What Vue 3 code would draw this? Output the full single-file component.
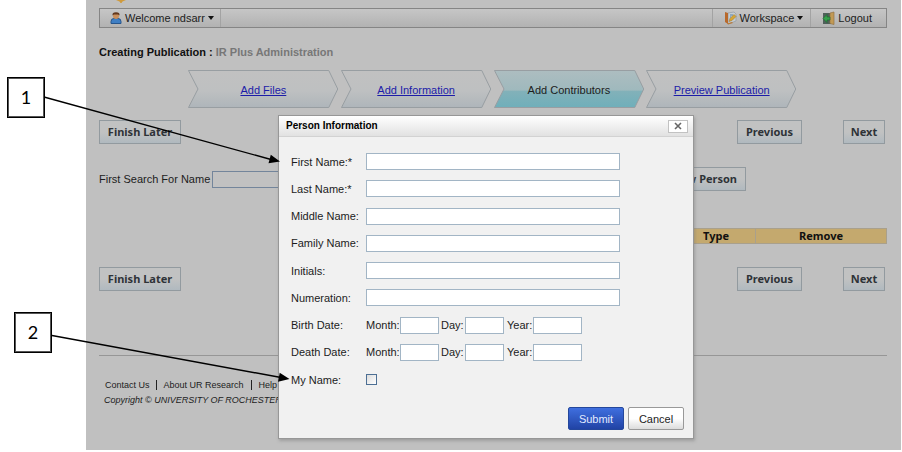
<script setup>
import { reactive, ref } from 'vue'

const steps = [
  { label: 'Add Files' },
  { label: 'Add Information' },
  { label: 'Add Contributors', active: true },
  { label: 'Preview Publication' }
]

const nameFields = [
  { id: 'first', label: 'First Name:*' },
  { id: 'last', label: 'Last Name:*' },
  { id: 'middle', label: 'Middle Name:' },
  { id: 'family', label: 'Family Name:' },
  { id: 'initials', label: 'Initials:' },
  { id: 'numeration', label: 'Numeration:' }
]

const dateFields = [
  { id: 'birth', label: 'Birth Date:' },
  { id: 'death', label: 'Death Date:' }
]

const person = reactive({})
const isMe = ref(false)
const search = ref('')
</script>

<template>
  <div class="stage">
    <main class="page">
      <svg class="logo" viewBox="0 0 14 4" aria-hidden="true">
        <path d="M2 0h10L8.500 1.500 7.500 3h-1L5.500 1.500z" fill="#cf9a3c" />
      </svg>

      <header class="toolbar">
        <button type="button" class="tool welcome">
          <svg width="12" height="14" viewBox="0 0 12 14" aria-hidden="true">
            <path d="M1 12.500V10.500q0-3 3-3h4q3 0 3 3v2z" fill="#3f7fc4" stroke="#28568c" />
            <circle cx="6" cy="5" r="3" fill="#c98f5c" />
            <path d="M2.500 4.500Q2 1.200 6 1.200T9.500 4.500L8 3.500H4z" fill="#63371c" />
          </svg>
          Welcome ndsarr
          <span class="caret"></span>
        </button>
        <button type="button" class="tool workspace">
          <svg width="13" height="14" viewBox="0 0 13 14" aria-hidden="true">
            <path d="M4 2l6-1 2 2v7l-8 3z" fill="#c5ccd2" stroke="#929ba3" stroke-width=".7" />
            <path d="M1 1l3 1v11l-3-2z" fill="#b8692c" />
            <path d="M3 12.500l5-1.500 1 1-5 1.500z" fill="#ba7938" />
            <path d="M5 10.500l1-3 4-4 2 2-4 4z" fill="#d5a636" stroke="#9b7330" stroke-width=".5" />
            <path d="M6 4h3M6 6h1" stroke="#5c87aa" />
          </svg>
          Workspace
          <span class="caret"></span>
        </button>
        <button type="button" class="tool logout">
          <svg width="13" height="14" viewBox="0 0 13 14" aria-hidden="true">
            <path d="M1 2h8v11H1z" fill="#50605a" />
            <path d="M8 2l4-1v12.500l-4-1z" fill="#c29a55" stroke="#927245" stroke-width=".7" />
            <path d="M1 7.500l4-4V6h3v3H5v2.500z" fill="#36a14b" stroke="#176c2d" stroke-width=".6" />
          </svg>
          Logout
        </button>
      </header>

      <h1 class="title">Creating Publication : <span>IR Plus Administration</span></h1>

      <nav class="steps" aria-label="Publication steps">
        <div v-for="s in steps" :key="s.label" class="step">
          <svg class="shape" viewBox="0 0 151 38" preserveAspectRatio="none" aria-hidden="true">
            <defs>
              <linearGradient id="plain" x1="0" y1="0" x2="0" y2="1">
                <stop offset="0" stop-color="#c1c1c1" />
                <stop offset=".55" stop-color="#bec0c1" />
                <stop offset="1" stop-color="#aeb5ba" />
              </linearGradient>
              <linearGradient id="active" x1="0" y1="0" x2="0" y2="1">
                <stop offset="0" stop-color="#adbdc0" />
                <stop offset=".53" stop-color="#9fb9bd" />
                <stop offset=".56" stop-color="#82b1b9" />
                <stop offset="1" stop-color="#6fafba" />
              </linearGradient>
            </defs>
            <path d="M.5.500H141L150 19 141 37.500H.5L10 19z" :fill="s.active ? 'url(#active)' : 'url(#plain)'" stroke="#989ea2" />
          </svg>
          <span v-if="s.active" class="step-text">{{ s.label }}</span>
          <a v-else href="#" class="step-text">{{ s.label }}</a>
        </div>
      </nav>

      <div class="actions">
        <button type="button" class="btn later">Finish Later</button>
        <button type="button" class="btn previous">Previous</button>
        <button type="button" class="btn next">Next</button>
      </div>

      <div class="search">
        <label for="search">First Search For Name</label>
        <input id="search" v-model="search" type="text" />
        <button type="button" class="btn">Add New Person</button>
      </div>

      <table class="people">
        <thead>
          <tr><th>Name</th><th class="type">Type</th><th class="remove">Remove</th></tr>
        </thead>
      </table>

      <div class="actions">
        <button type="button" class="btn later">Finish Later</button>
        <button type="button" class="btn previous">Previous</button>
        <button type="button" class="btn next">Next</button>
      </div>

      <footer class="footer">
        <div class="links">
          <a href="#">Contact Us</a><a href="#">About UR Research</a><a href="#">Help</a>
        </div>
        <p>Copyright © UNIVERSITY OF ROCHESTER LIBRARIES</p>
      </footer>

      <form class="dialog" role="dialog" aria-labelledby="dialog-title" @submit.prevent>
        <div class="dialog-head">
          <h2 id="dialog-title">Person Information</h2>
          <button type="button" class="close" aria-label="Close">
            <svg width="8" height="8" viewBox="0 0 8 8" aria-hidden="true">
              <path d="M1 1l6 6M7 1L1 7" stroke="#666" stroke-width="1.600" />
            </svg>
          </button>
        </div>
        <div class="fields">
          <div v-for="f in nameFields" :key="f.id" class="row">
            <label :for="f.id">{{ f.label }}</label>
            <input :id="f.id" v-model="person[f.id]" type="text" class="wide" />
          </div>
          <div v-for="d in dateFields" :key="d.id" class="row" role="group" :aria-label="d.label">
            <span>{{ d.label }}</span>
            <div class="date">
              <label class="month">Month:<input v-model="person[d.id + 'Month']" type="text" /></label>
              <label class="day">Day:<input v-model="person[d.id + 'Day']" type="text" /></label>
              <label class="year">Year:<input v-model="person[d.id + 'Year']" type="text" /></label>
            </div>
          </div>
          <div class="row">
            <label for="mine">My Name:</label>
            <input id="mine" v-model="isMe" type="checkbox" />
          </div>
        </div>
        <div class="dialog-foot">
          <button type="submit" class="submit">Submit</button>
          <button type="button" class="cancel">Cancel</button>
        </div>
      </form>
    </main>

    <svg class="arrows" width="300" height="450" viewBox="0 0 300 450" aria-hidden="true">
      <path d="M44 97L271 159.500M52 335.500L281 377.500" stroke="#000" stroke-width="1.400" fill="none" />
      <path d="M280 161.500L268.500 163.300 270.800 154.800zM289.500 379L278 381.700 279.700 372.700z" />
    </svg>
    <div class="callout one">1</div>
    <div class="callout two">2</div>
  </div>
</template>

<style>
body {
  margin: 0;
  background: #fff;
}
</style>

<style scoped>
* {
  box-sizing: border-box;
}
.stage {
  position: relative;
  padding: 0 1px 2px 86px;
  font: 11px/14px "Liberation Sans", Arial, sans-serif;
  color: #1c1c1c;
}
button,
input {
  font: inherit;
  color: inherit;
  margin: 0;
}
.page {
  position: relative;
  background: #c0c0c0;
  padding: 8px 14px 43px 13px;
}
.logo {
  position: absolute;
  top: 0;
  left: 28px;
  width: 14px;
  height: 4px;
}
.toolbar {
  display: flex;
  height: 20px;
  border: 1px solid #858585;
  background: linear-gradient(#c6c6c6, #b2b2b2);
}
.tool {
  display: flex;
  align-items: center;
  gap: 3px;
  border: 0;
  background: none;
  padding: 0 7px 0 11px;
}
.welcome {
  border-right: 1px solid #a3a3a3;
  margin-right: auto;
  padding: 0 6px 0 10px;
}
.workspace,
.logout {
  border-left: 1px solid #a3a3a3;
}
.logout {
  padding-right: 14px;
}
.caret {
  border: 3px solid transparent;
  border-top: 4px solid #111;
  border-bottom: 0;
}
.title {
  margin: 17px 0 11px;
  font-size: 11px;
  color: #111;
}
.title span {
  color: #777;
}
.steps {
  display: flex;
  gap: 2px;
  margin: 0 90px 0 89px;
}
.step {
  position: relative;
  flex: 1;
  height: 38px;
  display: flex;
  align-items: center;
  justify-content: center;
}
.shape {
  position: absolute;
  inset: 0;
  width: 100%;
  height: 100%;
}
.step-text {
  position: relative;
  padding-top: 2px;
}
a.step-text {
  color: #1c1ca8;
}
.actions {
  display: flex;
  margin-top: 12px;
}
.btn {
  height: 24px;
  padding: 0;
  border: 1px solid #929a9f;
  background: linear-gradient(#c1c2c2 50%, #b0b9bf);
  font: bold 11px/14px "Noto Sans", Tahoma, sans-serif;
  color: #2e3338;
}
.later {
  width: 82px;
  margin-right: auto;
}
.previous {
  width: 65px;
  margin-right: 41px;
}
.next {
  width: 42px;
  margin-right: 2px;
}
.search {
  display: flex;
  align-items: center;
  gap: 2px;
  margin: 23px 141px 0 0;
}
.search input {
  flex: 1;
  height: 17px;
  border: 1px solid #73859b;
  background: #c1c1c1;
}
.search .btn {
  padding: 0 8px;
}
.people {
  width: 480px;
  margin: 37px 0 0 auto;
  border-collapse: collapse;
  table-layout: fixed;
}
.people th {
  height: 15px;
  padding: 0;
  border: 1px solid #a9a08c;
  background: #c4a96e;
  font: bold 11px/14px "Noto Sans", Tahoma, sans-serif;
  color: #111;
}
.type {
  width: 79px;
}
.remove {
  width: 131px;
}
.people + .actions {
  margin-top: 23px;
}
.footer {
  margin-top: 64px;
  border-top: 1px solid #969696;
  padding: 24px 0 0 5px;
  font-size: 9px;
}
.links {
  display: flex;
  align-items: center;
  line-height: 10px;
  margin-bottom: 3px;
}
.links a {
  color: inherit;
  text-decoration: none;
  padding: 0 7px;
  border-left: 1px solid #222;
}
.links a:first-child {
  border: 0;
  padding: 0 6px 0 1px;
}
.footer p {
  margin: 0;
  font-style: italic;
}
.dialog {
  position: absolute;
  top: 115px;
  left: 192px;
  width: 416px;
  border: 1px solid #979797;
  background: #f1f1f1;
  box-shadow: 1px 2px 3px #7777;
}
.dialog-head {
  display: flex;
  align-items: center;
  justify-content: space-between;
  height: 21px;
  padding: 0 5px 0 7px;
  border-bottom: 1px solid #d2d2d2;
  background: linear-gradient(#fff, #e1e1e1);
}
.dialog-head h2 {
  margin: 0;
  font-size: 10px;
  color: #000;
}
.close {
  display: flex;
  align-items: center;
  justify-content: center;
  width: 20px;
  height: 13px;
  padding: 0;
  border: 1px solid #c2c2c2;
  background: #fff;
}
.fields {
  display: flex;
  flex-direction: column;
  justify-content: space-between;
  height: 235px;
  margin: 16px 12px 0;
}
.row {
  display: grid;
  grid-template-columns: 75px 1fr;
  align-items: center;
  height: 17px;
}
.row input[type="text"] {
  height: 17px;
  border: 1px solid #a2b5c5;
  background: #fff;
  padding: 0 2px;
}
.row .wide {
  width: 254px;
}
.row input[type="checkbox"] {
  appearance: none;
  width: 11px;
  height: 11px;
  border: 1px solid #4d6f94;
  background: linear-gradient(135deg, #dcdcdc, #fff);
}
.date {
  display: flex;
  gap: 3px;
}
.date label {
  display: flex;
  align-items: center;
  justify-content: space-between;
}
.date input {
  width: 39px;
}
.month {
  width: 72px;
}
.day {
  width: 63px;
}
.date .year {
  width: 75px;
}
.year input {
  width: 49px;
}
.dialog-foot {
  display: flex;
  justify-content: flex-end;
  gap: 4px;
  margin-top: 19px;
  padding: 0 9px 8px;
}
.dialog-foot button {
  width: 56px;
  height: 23px;
  padding: 0;
  border-radius: 2px;
}
.submit {
  border: 1px solid #24479c;
  background: linear-gradient(#3f6fdf, #2143a5);
  color: #e3ebff;
}
.cancel {
  border: 1px solid #999;
  background: linear-gradient(#fff 50%, #dcdcdc);
}
.arrows {
  position: absolute;
  top: 0;
  left: 0;
}
.callout {
  position: absolute;
  width: 38px;
  height: 41px;
  border: 1px solid #000;
  outline: 1px solid #555;
  outline-offset: -2px;
  background: #fff;
  text-align: center;
  font: 18px/38px Lato, sans-serif;
  color: #000;
}
.one {
  top: 77px;
  left: 7px;
}
.two {
  top: 312px;
  left: 14px;
}
</style>
